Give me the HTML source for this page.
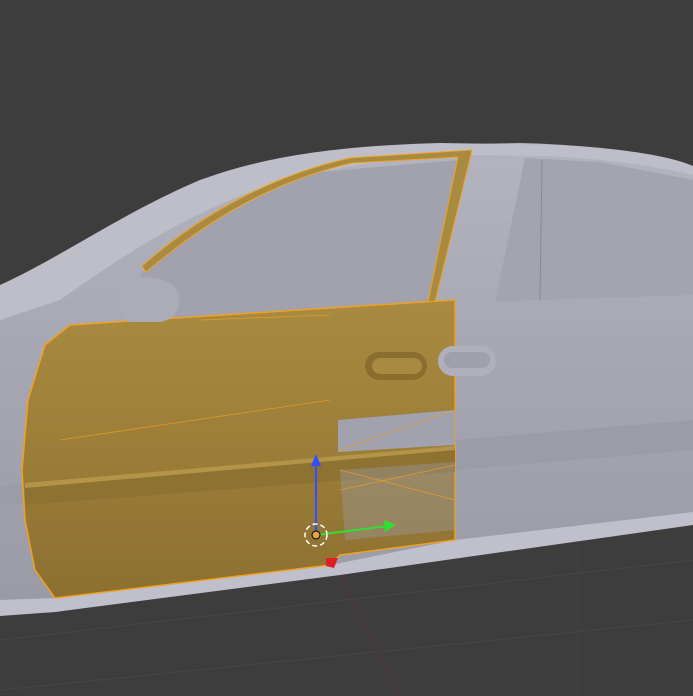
<!DOCTYPE html>
<html><head><meta charset="utf-8"><style>
html,body{margin:0;padding:0;background:#3d3d3d;width:693px;height:696px;overflow:hidden}
svg{display:block}
</style></head><body>
<svg width="693" height="696" viewBox="0 0 693 696" xmlns="http://www.w3.org/2000/svg">
<defs>
<linearGradient id="body" x1="0" y1="0" x2="0" y2="1">
<stop offset="0" stop-color="#b4b4c0"/><stop offset="0.5" stop-color="#a6a6b2"/><stop offset="1" stop-color="#9a9aa6"/>
</linearGradient>
<linearGradient id="door" x1="0" y1="0" x2="0" y2="1">
<stop offset="0" stop-color="#a88a40"/><stop offset="0.5" stop-color="#9c7e38"/><stop offset="1" stop-color="#8c7030"/>
</linearGradient>
</defs>
<rect width="693" height="696" fill="#3d3d3d"/>
<g stroke="#474747" stroke-width="1" fill="none">
<line x1="0" y1="640" x2="693" y2="560"/>
<line x1="0" y1="690" x2="693" y2="620"/>
<line x1="578" y1="540" x2="578" y2="696" stroke-dasharray="2,2"/>
</g>
<line x1="340" y1="575" x2="400" y2="696" stroke="#5a3434" stroke-width="1"/>
<path d="M0,285 C60,260 120,215 200,182 C260,160 320,150 420,145 L520,143 C600,145 660,155 693,168 L693,520 L340,568 L55,612 L0,614 Z" fill="url(#body)"/>
<path d="M0,285 C60,258 120,214 200,180 C260,158 330,146 440,143 L560,145 C620,148 670,156 693,166 L693,175 C650,165 600,158 540,156 L470,155 C380,158 300,170 230,200 C160,230 110,265 60,300 L0,320 Z" fill="#bebec9"/>
<path d="M525,158 L600,162 L693,180 L693,295 L540,300 L495,302 Z" fill="#a4a4b0"/>
<line x1="542" y1="160" x2="540" y2="300" stroke="#8a8a96"/>
<path d="M140,275 C190,235 250,195 320,172 L458,160 L430,302 L330,308 L178,320 L150,305 Z" fill="#a2a2ae"/>
<path d="M0,600 L55,598 L330,565 L455,540 L693,512 L693,525 L340,575 L55,612 L0,616 Z" fill="#c0c0cc"/>
<path d="M455,440 L693,420 L693,450 L455,470 Z" fill="#9c9ca8"/>
<path d="M0,486 L30,484 L30,505 L0,505 Z" fill="#9c9ca8"/>
<path d="M142,266 C200,215 270,176 350,158 L472,150 L435,302 L428,302 L458,157 L352,163 C270,182 205,222 146,272 Z" fill="#a88a40" stroke="#f0a020" stroke-width="1"/>
<path d="M45,345 L70,325 L178,318 L330,308 L455,300 L455,540 L340,555 L330,565 L55,598 L35,570 L25,520 L22,470 L28,400 Z" fill="url(#door)" stroke="#f0a020" stroke-width="1.5"/>
<path d="M125,285 C140,272 170,276 178,292 C182,308 175,320 160,322 L130,322 C118,318 115,300 125,285 Z" fill="#acacb8"/>
<path d="M25,485 L455,448 L455,472 L25,505 Z" fill="#8e7232"/>
<path d="M25,483 L455,446 L455,450 L25,488 Z" fill="#b39448"/>
<path d="M338,420 L455,410 L455,445 L338,452 Z" fill="#a2a2ae"/>
<path d="M340,470 L455,462 L455,530 L345,540 Z" fill="#9c9ca8" opacity="0.4"/>
<g stroke="#f0a020" stroke-width="0.8" fill="none" opacity="0.8">
<line x1="340" y1="450" x2="455" y2="410"/>
<line x1="340" y1="470" x2="455" y2="500"/>
<line x1="340" y1="490" x2="455" y2="465"/>
<line x1="200" y1="320" x2="330" y2="315"/>
<line x1="60" y1="440" x2="330" y2="400"/>
</g>
<rect x="365" y="352" width="62" height="28" rx="14" fill="#8a6e30"/>
<rect x="372" y="358" width="50" height="16" rx="8" fill="#a88a40"/>
<rect x="438" y="346" width="58" height="30" rx="15" fill="#b0b0bc"/>
<rect x="444" y="352" width="46" height="16" rx="8" fill="#a0a0ac"/>
<line x1="316" y1="535" x2="316" y2="462" stroke="#3050ff" stroke-width="2"/>
<polygon points="311,466 321,466 316,454" fill="#3050ff"/>
<line x1="316" y1="535" x2="388" y2="526" stroke="#30e030" stroke-width="2"/>
<polygon points="384,520 396,525 385,532" fill="#30e030"/>
<polygon points="326,558 338,558 334,568 326,566" fill="#e02020"/>
<circle cx="316" cy="535" r="11" fill="none" stroke="#fff" stroke-width="1.5" stroke-dasharray="5,3"/>
<circle cx="316" cy="535" r="4" fill="#e8a040" stroke="#000" stroke-width="1"/>
</svg>
</body></html>
